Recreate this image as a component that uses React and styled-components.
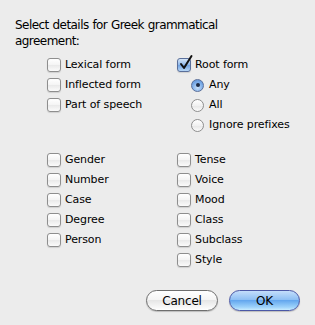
import React from 'react'
import styled, { createGlobalStyle } from 'styled-components'

const Global = createGlobalStyle`
  html, body { margin: 0; padding: 0; background: #ececec; }
  body { font-family: "DejaVu Sans", "Liberation Sans", sans-serif; }
`;

const Dialog = styled.div`
  width: 315px;
  height: 325px;
  box-sizing: border-box;
  background: #ececec;
  padding: 17px 15px 0 15px;
  color: #000;
`;

const Title = styled.div`
  font-size: 12px;
  line-height: 16px;
  letter-spacing: -0.55px;
  word-spacing: 0.5px;
`;

const Columns = styled.div`
  display: grid;
  grid-template-columns: 130px 1fr;
  margin-left: 32px;
  margin-top: ${p => p.$top}px;
`;

const Col = styled.div`
  display: flex;
  flex-direction: column;
`;

const Row = styled.label`
  display: flex;
  align-items: center;
  height: 20px;
  padding-left: ${p => p.$indent || 0}px;
`;

const Box = styled.span`
  position: relative;
  width: 14px;
  height: 14px;
  box-sizing: border-box;
  border: 1px solid ${p => (p.$on ? '#5a6f9a' : '#8e8e8e')};
  border-radius: 3px;
  background: ${p =>
    p.$on
      ? 'linear-gradient(#d6e6f8, #8db6e8 50%, #6fa2e2 51%, #b7d6f5)'
      : 'linear-gradient(#ffffff, #f4f4f4 50%, #e9e9e9 51%, #fbfbfb)'};
  box-shadow: 0 1px 1px rgba(0, 0, 0, 0.12);
  margin-right: 4px;
  flex: none;
`;

const Tick = styled.svg`
  position: absolute;
  left: 1px;
  top: -4px;
  overflow: visible;
`;

const Radio = styled.span`
  position: relative;
  width: 13px;
  height: 13px;
  box-sizing: border-box;
  border: 1px solid ${p => (p.$on ? '#5a6f9a' : '#8e8e8e')};
  border-radius: 50%;
  background: ${p =>
    p.$on
      ? 'radial-gradient(circle at 50% 70%, #c8e0fa, #76a8e6 60%, #5b8fd6)'
      : 'linear-gradient(#ffffff, #f1f1f1 50%, #e6e6e6 51%, #fbfbfb)'};
  margin-right: 5px;
  flex: none;
  &::after {
    content: '';
    display: ${p => (p.$on ? 'block' : 'none')};
    position: absolute;
    left: 3.5px;
    top: 3.5px;
    width: 4px;
    height: 4px;
    border-radius: 50%;
    background: #1d2a44;
  }
`;

const Text = styled.span`
  font-size: 11px;
  line-height: 14px;
  letter-spacing: -0.1px;
`;

const Footer = styled.div`
  display: flex;
  justify-content: flex-end;
  gap: 11px;
  margin-top: 20px;
`;

const Button = styled.button`
  width: ${p => p.$w}px;
  height: 21px;
  border-radius: 11px;
  font-family: "DejaVu Sans", sans-serif;
  font-size: 12px;
  letter-spacing: -0.2px;
  color: #000;
  padding: 0;
  border: 1px solid ${p => (p.$primary ? '#4b58a6' : '#6e6e6e')};
  background: ${p =>
    p.$primary
      ? 'linear-gradient(#c4defb, #8fc0f4 45%, #64a7ee 50%, #9ed3fb 85%, #c9ecff)'
      : 'linear-gradient(#ffffff, #f5f5f5 45%, #e6e6e6 50%, #f7f7f7 85%, #ffffff)'};
  box-shadow: 0 1px 1px rgba(0, 0, 0, 0.2);
`;

const Check = ({ label, on }) => (
  <Row>
    <Box $on={on}>
      {on && (
        <Tick width="14" height="16" viewBox="0 0 14 16">
          <path d="M2 9 L5 13 L12.5 1" fill="none" stroke="#111" strokeWidth="2" strokeLinecap="round" strokeLinejoin="round" />
        </Tick>
      )}
    </Box>
    <Text>{label}</Text>
  </Row>
);

const Option = ({ label, on }) => (
  <Row $indent={14}>
    <Radio $on={on} />
    <Text>{label}</Text>
  </Row>
);

export default function App() {
  return (
    <Dialog>
      <Global />
      <Title>
        Select details for Greek grammatical
        <br />
        agreement:
      </Title>
      <Columns $top={6}>
        <Col>
          <Check label="Lexical form" />
          <Check label="Inflected form" />
          <Check label="Part of speech" />
        </Col>
        <Col>
          <Check label="Root form" on />
          <Option label="Any" on />
          <Option label="All" />
          <Option label="Ignore prefixes" />
        </Col>
      </Columns>
      <Columns $top={15}>
        <Col>
          <Check label="Gender" />
          <Check label="Number" />
          <Check label="Case" />
          <Check label="Degree" />
          <Check label="Person" />
        </Col>
        <Col>
          <Check label="Tense" />
          <Check label="Voice" />
          <Check label="Mood" />
          <Check label="Class" />
          <Check label="Subclass" />
          <Check label="Style" />
        </Col>
      </Columns>
      <Footer>
        <Button $w={72}>Cancel</Button>
        <Button $w={71} $primary>OK</Button>
      </Footer>
    </Dialog>
  );
}
